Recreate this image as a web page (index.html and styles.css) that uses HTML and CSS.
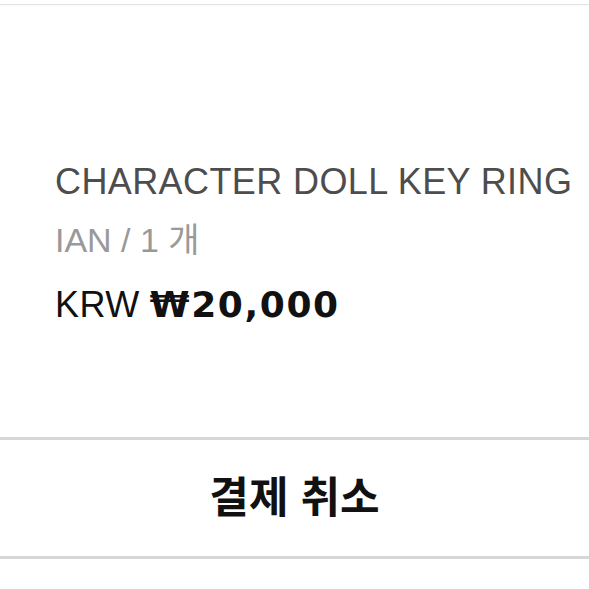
FILE: index.html
```html
<!DOCTYPE html>
<html lang="ko">
<head>
  <meta charset="utf-8">
  <title>주문 상세</title>
  <link rel="stylesheet" href="styles.css">
</head>
<body>
  <div class="top-bar"></div>

  <div class="item">
    <div class="item-name">CHARACTER DOLL KEY RING</div>
    <div class="item-option">IAN / 1 개</div>
    <div class="item-price"><span class="currency">KRW</span> <b>₩20,000</b></div>
  </div>

  <div class="actions">
    <button class="cancel-btn">결제 취소</button>
  </div>
</body>
</html>
```

FILE: styles.css
```css
body {
  font-family: "Liberation Sans", Arial, "Noto Sans CJK KR", sans-serif;
  background: #fff;
  margin: 0;
  color: #111;
}
.top-bar {
  margin-top: 4px;
  height: 1px;
  background: #e4e4e4;
  box-shadow: 0 1px 2px rgba(0, 0, 0, 0.04);
}
.item {
  padding: 150px 0 98px 55px;
}
.item-name {
  font-size: 36px;
  line-height: 54px;
  letter-spacing: 0.4px;
  color: #4d4d4d;
  white-space: nowrap;
}
.item-option {
  font-size: 34px;
  line-height: 62px;
  color: #999;
}
.item-price {
  font-size: 36px;
  line-height: 68px;
  color: #111;
}
.item-price .currency {
  letter-spacing: 0.5px;
}
.item-price b {
  font-family: "DejaVu Sans", sans-serif;
  font-weight: 700;
  letter-spacing: 1.6px;
}
.actions {
  border-top: 3px solid #d6d6d6;
  border-bottom: 3px solid #d6d6d6;
}
.cancel-btn {
  display: block;
  width: 100%;
  height: 116px;
  padding: 0 0 8px;
  border: 0;
  background: #fff;
  font-family: "Noto Sans CJK KR", sans-serif;
  font-size: 43px;
  font-weight: 700;
  color: #111;
  cursor: pointer;
}
```
